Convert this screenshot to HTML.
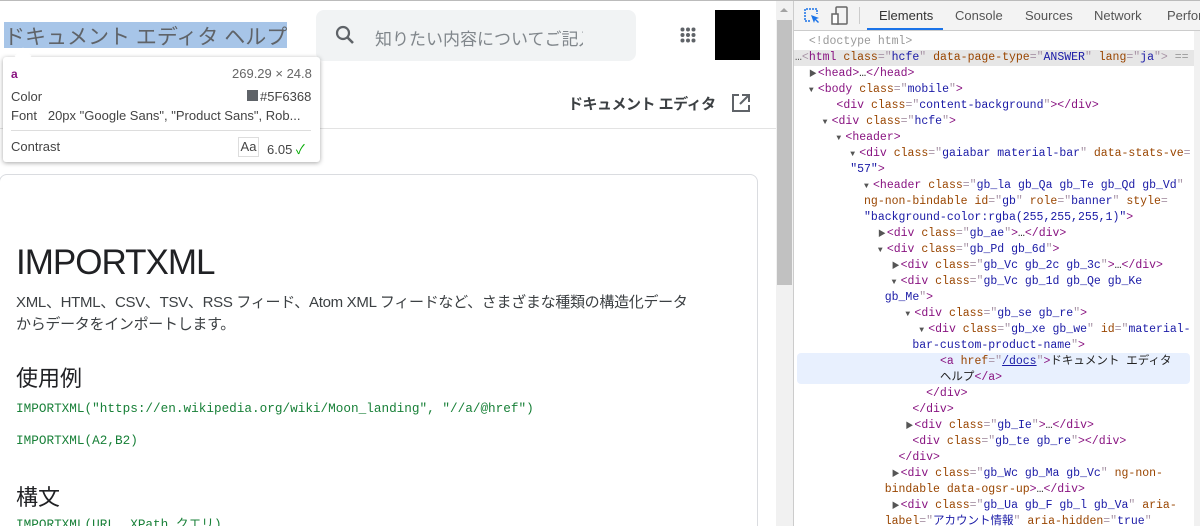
<!DOCTYPE html>
<html lang="ja" style="width:1200px;height:526px;overflow:hidden"><head><meta charset="utf-8">
<style>
*{margin:0;padding:0;box-sizing:border-box}
body{width:1200px;height:526px;overflow:hidden;background:#fff;font-family:"Liberation Sans","Noto Sans CJK JP",sans-serif;position:relative}
.abs{position:absolute}
.dt{font-family:"Liberation Mono","Noto Sans CJK JP",monospace;font-size:11.5px;color:#222}
.dt div{height:16px;line-height:16px;white-space:pre;overflow:visible}
.t{color:#881280}.an{color:#994500}.av{color:#1a1aa6}.p{color:#a894a6}
.tri{font-size:8px;color:#555;display:inline-block;width:9px;line-height:10px}
</style></head><body>
<div class="abs" style="left:0;top:0;width:1200px;height:1px;background:#bbb"></div>
<!-- left page -->
<div class="abs" style="left:4px;top:22px;width:283px;height:26px;background:#a7c5e8"></div>
<div class="abs" style="left:4px;top:21px;font-size:21px;color:#5f6368;white-space:nowrap">ドキュメント エディタ ヘルプ</div>
<div class="abs" style="left:316px;top:10px;width:320px;height:51px;background:#f1f3f4;border-radius:8px"></div>
<svg class="abs" style="left:333px;top:23px" width="24" height="24" viewBox="0 0 24 24"><circle cx="10" cy="10" r="6" fill="none" stroke="#5f6368" stroke-width="2.2"/><path d="M14.5 14.5L20 20" stroke="#5f6368" stroke-width="2.6"/></svg>
<div class="abs" style="left:375px;top:25px;font-size:17px;color:#80868b;white-space:nowrap;width:208px;overflow:hidden">知りたい内容についてご記入</div>
<svg class="abs" style="left:680px;top:27px" width="16" height="16" viewBox="0 0 16 16" fill="#5f6368"><circle cx="2.5" cy="2.5" r="2"/><circle cx="8" cy="2.5" r="2"/><circle cx="13.5" cy="2.5" r="2"/><circle cx="2.5" cy="8" r="2"/><circle cx="8" cy="8" r="2"/><circle cx="13.5" cy="8" r="2"/><circle cx="2.5" cy="13.5" r="2"/><circle cx="8" cy="13.5" r="2"/><circle cx="13.5" cy="13.5" r="2"/></svg>
<div class="abs" style="left:715px;top:10px;width:45px;height:50px;background:#000"></div>
<div class="abs" style="left:568px;top:93px;font-size:15px;font-weight:bold;color:#3c4043;white-space:nowrap;letter-spacing:-0.5px">ドキュメント エディタ</div>
<svg class="abs" style="left:731px;top:93px" width="20" height="20" viewBox="0 0 20 20"><path d="M8 2H2v16h16v-6" fill="none" stroke="#5f6368" stroke-width="2"/><path d="M11 2h7v7M18 2L9 11" fill="none" stroke="#5f6368" stroke-width="2"/></svg>
<div class="abs" style="left:0;top:128px;width:776px;height:1px;background:#e3e3e3"></div>
<div class="abs" style="left:-1px;top:174px;width:759px;height:352px;border:1px solid #dadce0;border-bottom:none;border-radius:8px 8px 0 0"></div>
<div class="abs" style="left:16px;top:243px;font-size:35px;color:#202124;white-space:nowrap;letter-spacing:-1px">IMPORTXML</div>
<div class="abs" style="left:16px;top:292px;font-size:15px;color:#3c4043;line-height:22px;white-space:nowrap;letter-spacing:-0.3px">XML、HTML、CSV、TSV、RSS フィード、Atom XML フィードなど、さまざまな種類の構造化データ<br>からデータをインポートします。</div>
<div class="abs" style="left:16px;top:361px;font-size:22px;color:#202124">使用例</div>
<div class="abs" style="left:16px;top:401px;font-family:'Liberation Mono',monospace;font-size:12.7px;color:#188038;white-space:nowrap">IMPORTXML("https://en.wikipedia.org/wiki/Moon_landing", "//a/@href")</div>
<div class="abs" style="left:16px;top:433px;font-family:'Liberation Mono',monospace;font-size:12.7px;color:#188038">IMPORTXML(A2,B2)</div>
<div class="abs" style="left:16px;top:480px;font-size:22px;color:#202124">構文</div>
<div class="abs" style="left:16px;top:517px;height:9px;overflow:hidden;font-family:'Liberation Mono',monospace;font-size:12.7px;line-height:16px;color:#188038;white-space:nowrap">IMPORTXML(URL, XPath クエリ)</div>
<!-- tooltip -->
<div class="abs" style="left:3px;top:57px;width:317px;height:105px;background:#fff;border-radius:3px;box-shadow:0 1px 5px rgba(0,0,0,.35)"></div>
<div class="abs" style="left:17px;top:50px;width:12px;height:12px;background:#fff;transform:rotate(45deg)"></div>
<div class="abs" style="left:11px;top:67px;font-size:12px;font-weight:bold;color:#881280">a</div>
<div class="abs" style="left:232px;top:66px;font-size:13px;color:#666">269.29 × 24.8</div>
<div class="abs" style="left:11px;top:89px;font-size:13px;color:#444">Color</div>
<div class="abs" style="left:247px;top:90px;width:11px;height:11px;background:#5f6368"></div>
<div class="abs" style="left:260px;top:89px;font-size:13px;color:#444">#5F6368</div>
<div class="abs" style="left:11px;top:108px;font-size:13px;color:#444;white-space:nowrap">Font&nbsp;&nbsp; 20px "Google Sans", "Product Sans", Rob...</div>
<div class="abs" style="left:11px;top:130px;width:300px;height:1px;background:#ddd"></div>
<div class="abs" style="left:11px;top:139px;font-size:13px;color:#444">Contrast</div>
<div class="abs" style="left:238px;top:137px;width:21px;height:20px;border:1px solid #ddd;font-size:13px;color:#444;text-align:center;line-height:18px">Aa</div>
<div class="abs" style="left:267px;top:139px;font-size:13px;color:#444">6.05 <span style="color:#0a0">✓</span></div>
<!-- scrollbar -->
<div class="abs" style="left:776px;top:1px;width:17px;height:525px;background:#f1f1f1"></div>
<div class="abs" style="left:777px;top:20px;width:15px;height:265px;background:#c1c1c1"></div>
<div class="abs" style="left:780px;top:8px;width:0;height:0;border-left:4px solid transparent;border-right:4px solid transparent;border-bottom:4px solid #a3a3a3"></div>
<!-- devtools -->
<div class="abs" style="left:793px;top:1px;width:407px;height:525px;background:#fff;border-left:1px solid #ccc"></div>
<div class="abs" style="left:794px;top:1px;width:406px;height:30px;background:#f3f3f3;border-bottom:1px solid #ccc"></div>
<svg class="abs" style="left:803px;top:7px" width="18" height="18" viewBox="0 0 18 18"><path d="M7 14H2V2h12v5" fill="none" stroke="#1a73e8" stroke-width="1.5" stroke-dasharray="2 1"/><path d="M8 8l8 3-3 1 3 3-1 1-3-3-1 3z" fill="#1a73e8"/></svg>
<svg class="abs" style="left:831px;top:6px" width="18" height="20" viewBox="0 0 18 20"><rect x="5" y="1" width="11" height="17" rx="1" fill="none" stroke="#666" stroke-width="1.5"/><rect x="1" y="8" width="6" height="10" fill="#fff" stroke="#666" stroke-width="1.5"/></svg>
<div class="abs" style="left:859px;top:7px;width:1px;height:17px;background:#ccc"></div>
<div class="abs" style="left:867px;top:28px;width:76px;height:2px;background:#1a73e8"></div>
<div class="abs" style="left:879px;top:8px;font-size:13px;color:#333">Elements</div>
<div class="abs" style="left:955px;top:8px;font-size:13px;color:#555">Console</div>
<div class="abs" style="left:1025px;top:8px;font-size:13px;color:#555">Sources</div>
<div class="abs" style="left:1094px;top:8px;font-size:13px;color:#555">Network</div>
<div class="abs" style="left:1167px;top:8px;font-size:13px;color:#555">Perfor</div>
<div class="abs" style="left:1194px;top:31px;width:6px;height:495px;background:#f1f1f1"></div>
<div class="abs" style="left:794px;top:50px;width:400px;height:16px;background:#e6e6e6"></div>
<div class="abs" style="left:797px;top:353px;width:393px;height:31px;background:#e8f0fe;border-radius:4px"></div>
<div class="abs dt" style="left:795px;top:34px;width:400px;overflow:hidden;height:492px">
<div>  <span style="color:#999">&lt;!doctype html&gt;</span></div>
<div><span style="color:#555">…</span><span class="p">&lt;</span><span class="t">html</span> <span class="an">class</span><span class="p">="</span><span class="av">hcfe</span><span class="p">"</span> <span class="an">data-page-type</span><span class="p">="</span><span class="av">ANSWER</span><span class="p">"</span> <span class="an">lang</span><span class="p">="</span><span class="av">ja</span><span class="p">"&gt;</span> <span style="color:#999">==</span></div>
<div>  <span class="tri">▶</span><span class="t">&lt;head&gt;</span>…<span class="t">&lt;/head&gt;</span></div>
<div>  <span class="tri">▼</span><span class="t">&lt;body</span> <span class="an">class</span><span class="p">="</span><span class="av">mobile</span><span class="p">"</span><span class="t">&gt;</span></div>
<div>      <span class="t">&lt;div</span> <span class="an">class</span><span class="p">="</span><span class="av">content-background</span><span class="p">"</span><span class="t">&gt;&lt;/div&gt;</span></div>
<div>    <span class="tri">▼</span><span class="t">&lt;div</span> <span class="an">class</span><span class="p">="</span><span class="av">hcfe</span><span class="p">"</span><span class="t">&gt;</span></div>
<div>      <span class="tri">▼</span><span class="t">&lt;header&gt;</span></div>
<div>        <span class="tri">▼</span><span class="t">&lt;div</span> <span class="an">class</span><span class="p">="</span><span class="av">gaiabar material-bar</span><span class="p">"</span> <span class="an">data-stats-ve</span><span class="p">=</span></div>
<div>        <span class="av">"57"</span><span class="t">&gt;</span></div>
<div>          <span class="tri">▼</span><span class="t">&lt;header</span> <span class="an">class</span><span class="p">="</span><span class="av">gb_la gb_Qa gb_Te gb_Qd gb_Vd</span><span class="p">"</span></div>
<div>          <span class="an">ng-non-bindable</span> <span class="an">id</span><span class="p">="</span><span class="av">gb</span><span class="p">"</span> <span class="an">role</span><span class="p">="</span><span class="av">banner</span><span class="p">"</span> <span class="an">style</span><span class="p">=</span></div>
<div>          <span class="av">"background-color:rgba(255,255,255,1)"</span><span class="t">&gt;</span></div>
<div>            <span class="tri">▶</span><span class="t">&lt;div</span> <span class="an">class</span><span class="p">="</span><span class="av">gb_ae</span><span class="p">"</span><span class="t">&gt;</span>…<span class="t">&lt;/div&gt;</span></div>
<div>            <span class="tri">▼</span><span class="t">&lt;div</span> <span class="an">class</span><span class="p">="</span><span class="av">gb_Pd gb_6d</span><span class="p">"</span><span class="t">&gt;</span></div>
<div>              <span class="tri">▶</span><span class="t">&lt;div</span> <span class="an">class</span><span class="p">="</span><span class="av">gb_Vc gb_2c gb_3c</span><span class="p">"</span><span class="t">&gt;</span>…<span class="t">&lt;/div&gt;</span></div>
<div>              <span class="tri">▼</span><span class="t">&lt;div</span> <span class="an">class</span><span class="p">="</span><span class="av">gb_Vc gb_1d gb_Qe gb_Ke</span></div>
<div>             <span class="av">gb_Me</span><span class="p">"</span><span class="t">&gt;</span></div>
<div>                <span class="tri">▼</span><span class="t">&lt;div</span> <span class="an">class</span><span class="p">="</span><span class="av">gb_se gb_re</span><span class="p">"</span><span class="t">&gt;</span></div>
<div>                  <span class="tri">▼</span><span class="t">&lt;div</span> <span class="an">class</span><span class="p">="</span><span class="av">gb_xe gb_we</span><span class="p">"</span> <span class="an">id</span><span class="p">="</span><span class="av">material-</span></div>
<div>                 <span class="av">bar-custom-product-name</span><span class="p">"</span><span class="t">&gt;</span></div>
<div>                     <span class="t">&lt;a</span> <span class="an">href</span><span class="p">="</span><span class="av" style="text-decoration:underline;color:#1a1aa6">/docs</span><span class="p">"</span><span class="t">&gt;</span>ドキュメント エディタ</div>
<div>                     ヘルプ<span class="t">&lt;/a&gt;</span></div>
<div>                   <span class="t">&lt;/div&gt;</span></div>
<div>                 <span class="t">&lt;/div&gt;</span></div>
<div>                <span class="tri">▶</span><span class="t">&lt;div</span> <span class="an">class</span><span class="p">="</span><span class="av">gb_Ie</span><span class="p">"</span><span class="t">&gt;</span>…<span class="t">&lt;/div&gt;</span></div>
<div>                 <span class="t">&lt;div</span> <span class="an">class</span><span class="p">="</span><span class="av">gb_te gb_re</span><span class="p">"</span><span class="t">&gt;&lt;/div&gt;</span></div>
<div>               <span class="t">&lt;/div&gt;</span></div>
<div>              <span class="tri">▶</span><span class="t">&lt;div</span> <span class="an">class</span><span class="p">="</span><span class="av">gb_Wc gb_Ma gb_Vc</span><span class="p">"</span> <span class="an">ng-non-</span></div>
<div>             <span class="an">bindable data-ogsr-up</span><span class="t">&gt;</span>…<span class="t">&lt;/div&gt;</span></div>
<div>              <span class="tri">▶</span><span class="t">&lt;div</span> <span class="an">class</span><span class="p">="</span><span class="av">gb_Ua gb_F gb_l gb_Va</span><span class="p">"</span> <span class="an">aria-</span></div>
<div>             <span class="an">label</span><span class="p">="</span><span class="av">アカウント情報</span><span class="p">"</span> <span class="an">aria-hidden</span><span class="p">="</span><span class="av">true</span><span class="p">"</span></div>
</div>
</body></html>
